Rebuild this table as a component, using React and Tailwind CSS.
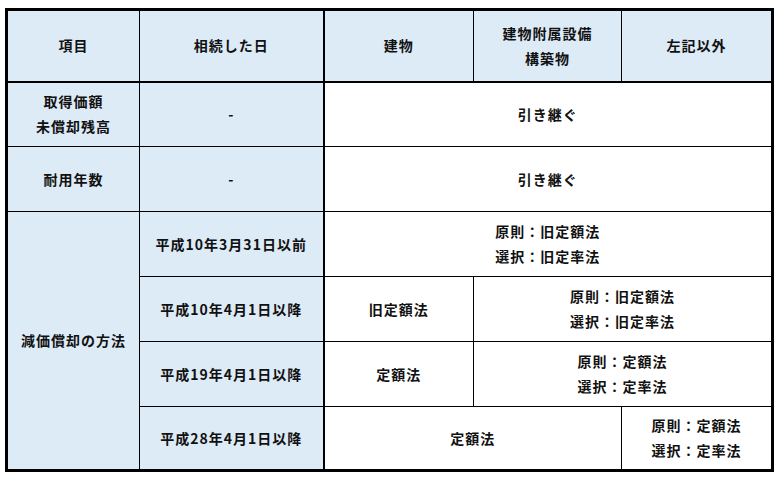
import React from "react";

const blue = "bg-[#ddebf7]";
const cell = "border border-black text-center align-middle p-0";

function Two({ a, b }) {
  return (
    <div className="leading-[25px]">
      <div>{a}</div>
      <div>{b}</div>
    </div>
  );
}

export default function App() {
  return (
    <div
      className="w-[779px] h-[477px] bg-white pt-[8px] pl-[5px]"
      style={{ fontFamily: '"Noto Sans CJK JP", "Noto Sans", sans-serif' }}
    >
      <table className="table-fixed border-collapse border-[3px] border-black w-[766px] text-[14px] font-bold text-[#111] tracking-[1px]">
        <colgroup>
          <col className="w-[133px]" />
          <col className="w-[184px]" />
          <col className="w-[150px]" />
          <col className="w-[148px]" />
          <col className="w-[151px]" />
        </colgroup>
        <thead>
          <tr className="h-[72px]">
            <th className={`${cell} ${blue} border-b-2`}>項目</th>
            <th className={`${cell} ${blue} border-b-2 border-r-2`}>相続した日</th>
            <th className={`${cell} ${blue} border-b-2`}>建物</th>
            <th className={`${cell} ${blue} border-b-2`}>
              <Two a="建物附属設備" b="構築物" />
            </th>
            <th className={`${cell} ${blue} border-b-2`}>左記以外</th>
          </tr>
        </thead>
        <tbody>
          <tr className="h-[65px]">
            <td className={`${cell} ${blue}`}>
              <Two a="取得価額" b="未償却残高" />
            </td>
            <td className={`${cell} ${blue} border-r-2`}>-</td>
            <td className={cell} colSpan={3}>引き継ぐ</td>
          </tr>
          <tr className="h-[65px]">
            <td className={`${cell} ${blue}`}>耐用年数</td>
            <td className={`${cell} ${blue} border-r-2`}>-</td>
            <td className={cell} colSpan={3}>引き継ぐ</td>
          </tr>
          <tr className="h-[65px]">
            <td className={`${cell} ${blue}`} rowSpan={4}>減価償却の方法</td>
            <td className={`${cell} ${blue} border-r-2`}>平成10年3月31日以前</td>
            <td className={cell} colSpan={3}>
              <Two a="原則：旧定額法" b="選択：旧定率法" />
            </td>
          </tr>
          <tr className="h-[65px]">
            <td className={`${cell} ${blue} border-r-2`}>平成10年4月1日以降</td>
            <td className={cell}>旧定額法</td>
            <td className={cell} colSpan={2}>
              <Two a="原則：旧定額法" b="選択：旧定率法" />
            </td>
          </tr>
          <tr className="h-[65px]">
            <td className={`${cell} ${blue} border-r-2`}>平成19年4月1日以降</td>
            <td className={cell}>定額法</td>
            <td className={cell} colSpan={2}>
              <Two a="原則：定額法" b="選択：定率法" />
            </td>
          </tr>
          <tr className="h-[64px]">
            <td className={`${cell} ${blue} border-r-2`}>平成28年4月1日以降</td>
            <td className={cell} colSpan={2}>定額法</td>
            <td className={cell}>
              <Two a="原則：定額法" b="選択：定率法" />
            </td>
          </tr>
        </tbody>
      </table>
    </div>
  );
}
